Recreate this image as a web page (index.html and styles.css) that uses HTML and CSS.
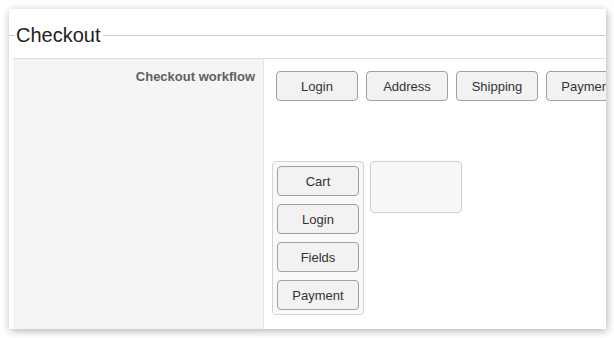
FILE: index.html
```html
<!DOCTYPE html>
<html lang="en">
<head>
    <meta charset="UTF-8">
    <title>Checkout</title>
    <link rel="stylesheet" href="styles.css">
</head>
<body>
    <div class="panel">
        <div class="legend"><span>Checkout</span></div>
        <div class="form-row">
            <div class="form-label">Checkout workflow</div>
            <div class="form-field">
                <div class="steps">
                    <button class="step">Login</button>
                    <button class="step">Address</button>
                    <button class="step">Shipping</button>
                    <button class="step">Payment</button>
                </div>
                <div class="lists">
                    <div class="list">
                        <button class="step">Cart</button>
                        <button class="step">Login</button>
                        <button class="step">Fields</button>
                        <button class="step">Payment</button>
                    </div>
                    <div class="list empty"></div>
                </div>
            </div>
        </div>
    </div>
</body>
</html>
```

FILE: styles.css
```css
body {
    font-family: "Liberation Sans", Arial, sans-serif;
    margin: 0;
    padding: 0;
    background-color: #fff;
}
.panel {
    width: 597px;
    height: 320px;
    margin: 9px;
    padding: 14px 0 0 4px;
    box-sizing: border-box;
    background-color: #fff;
    box-shadow: 1px 2px 8px rgba(0, 0, 0, 0.3);
    overflow: hidden;
    display: flex;
    flex-direction: column;
}
.legend {
    display: flex;
    align-items: center;
    margin-left: -4px;
    height: 24px;
    font-size: 20px;
    color: #222;
}
.legend::before {
    content: "";
    width: 5px;
    border-top: 1px solid #ccc;
    margin-right: 2px;
}
.legend::after {
    content: "";
    flex: 1;
    border-top: 1px solid #ccc;
    margin-left: 2px;
}
.form-row {
    flex: 1;
    display: flex;
    margin-top: 11px;
    border-top: 1px solid #ddd;
}
.form-label {
    flex: none;
    width: 251px;
    box-sizing: border-box;
    padding: 10px 8px 0 0;
    text-align: right;
    font-size: 13px;
    font-weight: bold;
    color: #5f5f5f;
    background-color: #f5f5f5;
    border-right: 1px solid #e6e6e6;
}
.form-field {
    flex: 1;
    min-width: 0;
    padding: 12px 0 0 8px;
}
.steps {
    display: flex;
    gap: 8px;
    padding-left: 4px;
    white-space: nowrap;
}
.step {
    flex: none;
    width: 82px;
    height: 30px;
    padding: 0;
    font-family: inherit;
    font-size: 13px;
    color: #333;
    background-color: #f2f2f2;
    border: 1px solid #a0a0a0;
    border-radius: 4px;
    text-align: center;
    overflow: hidden;
}
.lists {
    display: flex;
    align-items: flex-start;
    gap: 6px;
    margin-top: 60px;
}
.list {
    width: 92px;
    box-sizing: border-box;
    padding: 4px;
    display: flex;
    flex-direction: column;
    gap: 8px;
    background-color: #f9f9f9;
    border: 1px solid #d4d4d4;
    border-radius: 4px;
}
.list .step {
    height: 30px;
}
.list.empty {
    height: 52px;
    background-color: #f7f7f7;
    border-color: #d0d0d0;
}
```
